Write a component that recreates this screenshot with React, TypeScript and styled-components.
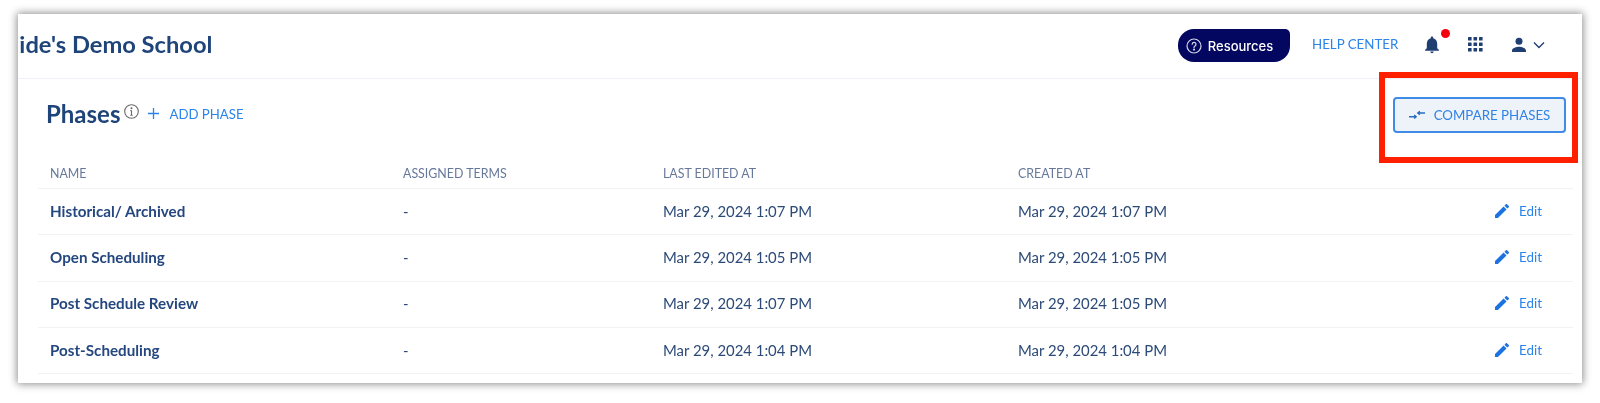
import styled, { createGlobalStyle } from "styled-components";

const GlobalStyle = createGlobalStyle`
  html, body {
    margin: 0;
    padding: 0;
    background: #fff;
    font-family: Lato, "Open Sans", sans-serif;
  }
`;

const Page = styled.div`
  width: 1600px;
  height: 403px;
  padding: 14px 18px 20px;
  box-sizing: border-box;
  overflow: hidden;
`;

const Panel = styled.div`
  position: relative;
  height: 369px;
  background: #fff;
  box-shadow: 0 0 8px 1px rgba(0, 0, 0, 0.45);
  filter: blur(0.4px);
`;

const TopBar = styled.header`
  height: 64px;
  display: flex;
  align-items: center;
  border-bottom: 1px solid #eef1f5;
  overflow: hidden;
`;

const SchoolName = styled.div`
  margin-left: -29px;
  margin-top: -4px;
  font-size: 23.7px;
  font-weight: 700;
  color: #1f4479;
  white-space: nowrap;
  flex: 1;
`;

const ResourcesButton = styled.button`
  width: 112px;
  height: 33px;
  margin-top: -1px;
  display: flex;
  align-items: center;
  justify-content: center;
  gap: 6px;
  padding: 0 9px 0 0;
  border: none;
  border-radius: 16px 5px 16px 16px;
  background: #03075f;
  color: #fff;
  font-family: Inter, sans-serif;
  font-size: 13px;
  font-weight: 500;
`;

const HelpLink = styled.a`
  margin-left: 22px;
  margin-top: -4px;
  width: 86px;
  font-size: 13.3px;
  color: #2a84ea;
  white-space: nowrap;
`;

const BarIcon = styled.span<{ $left: number; $width: number }>`
  position: relative;
  display: flex;
  align-items: center;
  margin-left: ${(p) => p.$left}px;
  margin-top: -3px;
  width: ${(p) => p.$width}px;
`;

const NotificationDot = styled.span`
  position: absolute;
  top: -7px;
  right: -10px;
  width: 9px;
  height: 9px;
  border-radius: 50%;
  background: #f5000f;
`;

const RightGap = styled.span`
  width: 36px;
`;

const Content = styled.section`
  padding: 0 9px 0 20px;
`;

const TitleRow = styled.div`
  height: 72px;
  display: flex;
  align-items: center;
  padding-left: 8px;
`;

const PageTitle = styled.h1`
  margin: -4px 0 0;
  font-size: 24px;
  font-weight: 700;
  color: #1f4479;
`;

const InfoIcon = styled.svg`
  margin: -7px 0 0 4px;
`;

const AddButton = styled.a`
  display: flex;
  align-items: center;
  gap: 10px;
  margin: -3px 0 0 9px;
  font-size: 13.2px;
  color: #2a84ea;
`;

const CompareButton = styled.button`
  margin-left: auto;
  margin-right: 7px;
  width: 173px;
  height: 36px;
  display: flex;
  align-items: center;
  justify-content: center;
  gap: 9px;
  padding: 0;
  border: 2px solid #3f8be6;
  border-radius: 4px;
  background: #eef3f9;
  color: #2f82e6;
  font-family: inherit;
  font-size: 13.3px;
`;

const Row = styled.div<{ $head?: boolean }>`
  height: ${(p) => (p.$head ? 38 : 46.33)}px;
  box-sizing: border-box;
  display: grid;
  grid-template-columns: 353px 260px 355px 1fr 78px;
  align-items: center;
  padding: ${(p) => (p.$head ? "8px 0 0 12px" : "0 0 2px 12px")};
  border-bottom: 1px solid #f0f2f5;
`;

const HeadCell = styled.div`
  font-size: 12.4px;
  color: #66789a;
`;

const NameCell = styled.div`
  font-size: 15.2px;
  font-weight: 700;
  color: #24477f;
`;

const TextCell = styled.div`
  font-size: 14.9px;
  color: #2c4a78;
`;

const EditLink = styled.a`
  display: flex;
  align-items: center;
  gap: 10px;
  font-size: 13.4px;
  color: #2a84ea;
`;

const Highlight = styled.div`
  position: absolute;
  left: 1361px;
  top: 58px;
  width: 199px;
  height: 91px;
  box-sizing: border-box;
  border: 6.5px solid #ff2000;
  pointer-events: none;
`;

const phases = [
  { name: "Historical/ Archived", edited: "Mar 29, 2024 1:07 PM", created: "Mar 29, 2024 1:07 PM" },
  { name: "Open Scheduling", edited: "Mar 29, 2024 1:05 PM", created: "Mar 29, 2024 1:05 PM" },
  { name: "Post Schedule Review", edited: "Mar 29, 2024 1:07 PM", created: "Mar 29, 2024 1:05 PM" },
  { name: "Post-Scheduling", edited: "Mar 29, 2024 1:04 PM", created: "Mar 29, 2024 1:04 PM" },
];

function PencilIcon() {
  return (
    <svg width="14" height="14" viewBox="3 3 18 18" fill="#1a73e0">
      <path d="M3 17.25V21h3.75L17.81 9.94l-3.75-3.75L3 17.25zM20.71 7.04a1 1 0 0 0 0-1.41l-2.34-2.34a1 1 0 0 0-1.41 0l-1.83 1.83 3.75 3.75 1.83-1.83z" />
    </svg>
  );
}

export default function App() {
  return (
    <Page>
      <GlobalStyle />
      <Panel>
        <TopBar>
          <SchoolName>Guide's Demo School</SchoolName>
          <ResourcesButton>
            <svg width="16" height="16" viewBox="0 0 16 16" fill="none" stroke="#d5d7e8" strokeWidth="1.2">
              <circle cx="8" cy="8" r="7" />
              <path d="M6.2 6.2a1.9 1.9 0 1 1 2.8 1.7c-.7.4-1 .8-1 1.5" strokeLinecap="round" />
              <circle cx="8" cy="11.6" r=".5" fill="#d5d7e8" />
            </svg>
            Resources
          </ResourcesButton>
          <HelpLink>HELP CENTER</HelpLink>
          <BarIcon $left={26} $width={16}>
            <svg width="16" height="18" viewBox="0 0 16 18" fill="#1f3f73">
              <path d="M8 0.5c-.7 0-1.2.5-1.2 1.2v.6C4.2 3 2.8 5.2 2.8 8v4.2L1 14v.8h14V14l-1.8-1.8V8c0-2.8-1.4-5-4-5.7v-.6C9.200 1 8.700 .5 8 .5z" />
              <path d="M6.300 15.600a1.700 1.700 0 0 0 3.400 0z" />
            </svg>
            <NotificationDot />
          </BarIcon>
          <BarIcon $left={28} $width={15}>
            <svg width="15" height="15" viewBox="0 0 15 15" fill="#1f3f73">
              {[0, 5.5, 11].flatMap((y) =>
                [0, 5.5, 11].map((x) => <rect key={`${x}-${y}`} x={x} y={y} width="3.6" height="3.6" rx=".5" />)
              )}
            </svg>
          </BarIcon>
          <BarIcon $left={28} $width={35}>
            <svg width="16" height="16" viewBox="0 0 16 16" fill="#1f3f73">
              <circle cx="8" cy="4.200" r="3.500" />
              <path d="M1 15v-1.500c0-2.400 4.600-3.700 7-3.700s7 1.300 7 3.700V15z" />
            </svg>
            <svg style={{ marginLeft: 6 }} width="12" height="8" viewBox="0 0 12 8" fill="none" stroke="#1f3f73" strokeWidth="1.400">
              <path d="M1 1.500l5 5 5-5" />
            </svg>
          </BarIcon>
          <RightGap />
        </TopBar>
        <Content>
          <TitleRow>
            <PageTitle>Phases</PageTitle>
            <InfoIcon width="15" height="15" viewBox="0 0 15 15" fill="none" stroke="#6a6a6a" strokeWidth="1.100">
              <circle cx="7.500" cy="7.500" r="6.800" />
              <path d="M7.500 6.500v4.800M6.300 6.600h1.200M6.300 11.300h2.400" />
              <circle cx="7.500" cy="4.200" r=".5" fill="#6a6a6a" />
            </InfoIcon>
            <AddButton>
              <svg width="11" height="11" viewBox="0 0 11 11" stroke="#2a84ea" strokeWidth="1.300">
                <path d="M5.500 0v11M0 5.500h11" />
              </svg>
              ADD PHASE
            </AddButton>
            <CompareButton>
              <svg width="16" height="10" viewBox="0 0 16 10" fill="none" stroke="#2a6cc0" strokeWidth="1.400">
                <path d="M0 6.800h7M5.200 5l2 1.800-2 1.800" />
                <path d="M16 3H9M10.800 1.200L8.800 3l2 1.800" />
              </svg>
              COMPARE PHASES
            </CompareButton>
          </TitleRow>
          <Row $head>
            <HeadCell>NAME</HeadCell>
            <HeadCell>ASSIGNED TERMS</HeadCell>
            <HeadCell>LAST EDITED AT</HeadCell>
            <HeadCell>CREATED AT</HeadCell>
            <span />
          </Row>
          {phases.map((phase) => (
            <Row key={phase.name}>
              <NameCell>{phase.name}</NameCell>
              <TextCell>-</TextCell>
              <TextCell>{phase.edited}</TextCell>
              <TextCell>{phase.created}</TextCell>
              <EditLink>
                <PencilIcon />
                Edit
              </EditLink>
            </Row>
          ))}
        </Content>
        <Highlight />
      </Panel>
    </Page>
  );
}
